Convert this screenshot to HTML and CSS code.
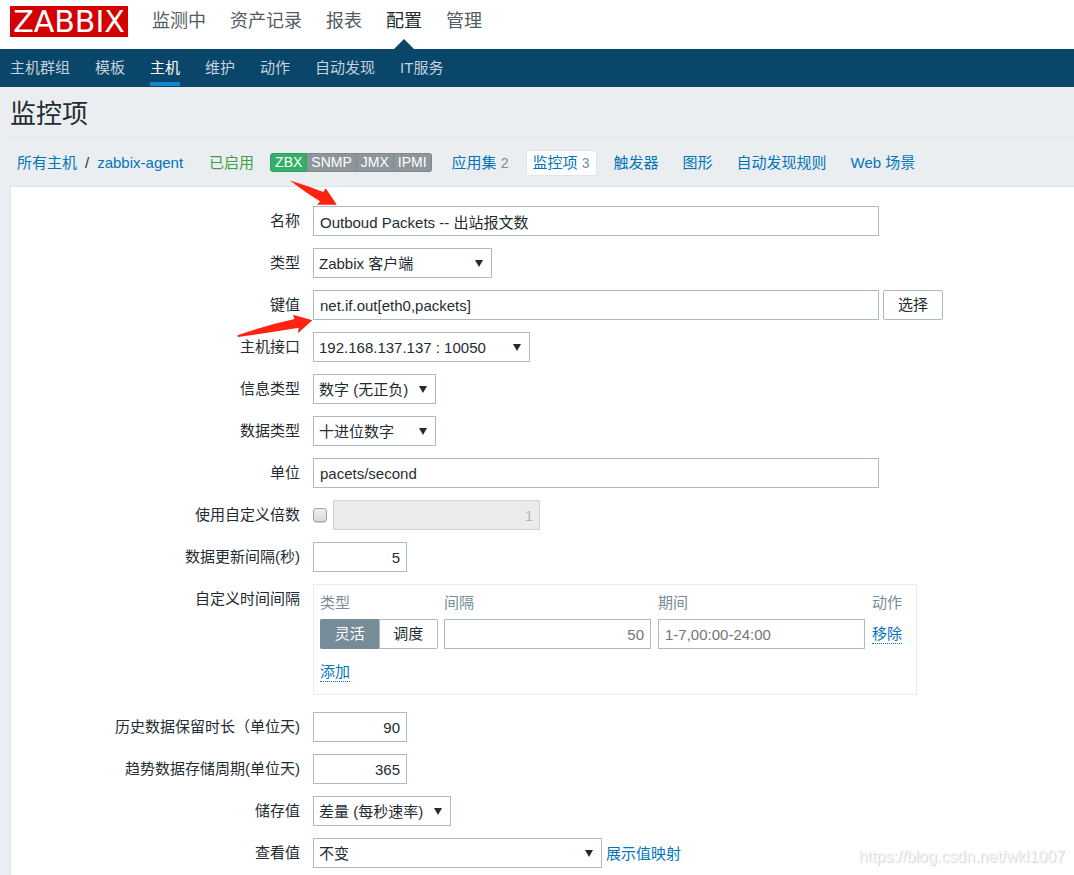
FILE: index.html
```html
<!DOCTYPE html>
<html lang="zh-CN">
<head>
<meta charset="utf-8">
<title>监控项</title>
<link rel="stylesheet" href="styles.css">
</head>
<body>
<header class="top">
  <a class="logo" href="#">ZABBIX</a>
  <nav class="top-nav">
    <a href="#">监测中</a>
    <a href="#">资产记录</a>
    <a href="#">报表</a>
    <a href="#" class="selected">配置</a>
    <a href="#">管理</a>
  </nav>
</header>
<nav class="sub-nav">
  <a href="#">主机群组</a>
  <a href="#">模板</a>
  <a href="#" class="selected">主机</a>
  <a href="#">维护</a>
  <a href="#">动作</a>
  <a href="#">自动发现</a>
  <a href="#">IT服务</a>
</nav>
<main class="page">
  <h1 class="title">监控项</h1>
  <div class="host-bar">
    <div class="crumbs"><a href="#">所有主机</a><span>/</span><a href="#">zabbix-agent</a></div>
    <span class="enabled">已启用</span>
    <div class="badges"><span class="badge on">ZBX</span><span class="badge">SNMP</span><span class="badge">JMX</span><span class="badge">IPMI</span></div>
    <nav class="tabs">
      <a href="#">应用集 <span class="count">2</span></a>
      <a href="#" class="selected">监控项 <span class="count">3</span></a>
      <a href="#">触发器</a>
      <a href="#">图形</a>
      <a href="#">自动发现规则</a>
      <a href="#">Web 场景</a>
    </nav>
  </div>
  <form class="panel">
    <div class="row">
      <label for="name">名称</label>
      <div class="field">
        <input class="text wide" id="name" type="text" value="Outboud Packets -- 出站报文数">
        <svg class="pointer pointer-name" width="48" height="26" viewBox="0 0 48 26" aria-hidden="true"><path d="M1 .6Q19 6 34.300 12L36.700 8.300 47.800 24.800H28.200L31 21.300Q17 13 1 .6Z"/></svg>
      </div>
    </div>
    <div class="row">
      <label for="type">类型</label>
      <div class="field"><span class="select w-type"><select id="type"><option>Zabbix 客户端</option></select></span></div>
    </div>
    <div class="row">
      <label for="key">键值</label>
      <div class="field">
        <input class="text wide" id="key" type="text" value="net.if.out[eth0,packets]">
        <button class="button" type="button">选择</button>
        <svg class="pointer pointer-key" width="76" height="24" viewBox="0 0 76 24" aria-hidden="true"><path d="M.5 21.300Q30 11 57.500 5L56 .7 75.300 6.300 61 19.300 61.700 13.700Q30 19 1 23Z"/></svg>
      </div>
    </div>
    <div class="row">
      <label for="iface">主机接口</label>
      <div class="field"><span class="select w-iface"><select id="iface"><option>192.168.137.137 : 10050</option></select></span></div>
    </div>
    <div class="row">
      <label for="info">信息类型</label>
      <div class="field"><span class="select w-data"><select id="info"><option>数字 (无正负)</option></select></span></div>
    </div>
    <div class="row">
      <label for="data">数据类型</label>
      <div class="field"><span class="select w-data"><select id="data"><option>十进位数字</option></select></span></div>
    </div>
    <div class="row">
      <label for="unit">单位</label>
      <div class="field"><input class="text wide" id="unit" type="text" value="pacets/second"></div>
    </div>
    <div class="row">
      <label for="multi">使用自定义倍数</label>
      <div class="field">
        <input class="check" id="multi" type="checkbox">
        <input class="text medium number" type="text" value="1" aria-label="倍数" disabled>
      </div>
    </div>
    <div class="row">
      <label for="delay">数据更新间隔(秒)</label>
      <div class="field"><input class="text small number" id="delay" type="text" value="5"></div>
    </div>
    <div class="row intervals-row">
      <span class="row-label">自定义时间间隔</span>
      <div class="intervals">
        <table>
          <thead><tr><th class="c-type">类型</th><th class="c-value">间隔</th><th class="c-value">期间</th><th>动作</th></tr></thead>
          <tbody>
            <tr>
              <td>
                <div class="toggle">
                  <input type="radio" name="mode" id="flex" checked><label for="flex">灵活</label>
                  <input type="radio" name="mode" id="sched"><label for="sched">调度</label>
                </div>
              </td>
              <td><input class="text medium number" type="text" placeholder="50" aria-label="间隔"></td>
              <td><input class="text medium" type="text" placeholder="1-7,00:00-24:00" aria-label="期间"></td>
              <td><a class="action" href="#">移除</a></td>
            </tr>
            <tr class="add-row"><td colspan="4"><a class="action" href="#">添加</a></td></tr>
          </tbody>
        </table>
      </div>
    </div>
    <div class="row">
      <label for="history">历史数据保留时长（单位天)</label>
      <div class="field"><input class="text small number" id="history" type="text" value="90"></div>
    </div>
    <div class="row">
      <label for="trends">趋势数据存储周期(单位天)</label>
      <div class="field"><input class="text small number" id="trends" type="text" value="365"></div>
    </div>
    <div class="row">
      <label for="store">储存值</label>
      <div class="field"><span class="select w-store"><select id="store"><option>差量 (每秒速率)</option></select></span></div>
    </div>
    <div class="row">
      <label for="show">查看值</label>
      <div class="field"><span class="select w-show"><select id="show"><option>不变</option></select></span><a class="map-link" href="#">展示值映射</a></div>
    </div>
  </form>
</main>
<div class="watermark">https://blog.csdn.net/wkl1007</div>
</body>
</html>
```

FILE: styles.css
```css
* { box-sizing: border-box; }

body {
  margin: 0;
  min-height: 100vh;
  display: flex;
  flex-direction: column;
  background: #ebeef0;
  color: #1f2c33;
  font: 15px/20px "Liberation Sans", "Noto Sans CJK SC", sans-serif;
}

a { color: #0275b8; text-decoration: none; }
input, select, button { font: inherit; color: inherit; margin: 0; }

.top {
  display: flex;
  align-items: flex-start;
  gap: 24px;
  height: 49px;
  padding: 6px 10px 0;
  background: #fff;
}
.logo {
  width: 118px;
  height: 31px;
  background: #d40000;
  color: #fff;
  font: 30px/32px "DejaVu Sans", sans-serif;
  text-align: center;
}
.top-nav { display: flex; gap: 24px; font-size: 18px; line-height: 30px; }
.top-nav a { position: relative; height: 43px; color: #4f5c64; }
.top-nav .selected { color: #1f2c33; }
.top-nav .selected::after {
  content: "";
  position: absolute;
  left: 50%;
  bottom: 0;
  margin-left: -10px;
  border: solid transparent;
  border-width: 0 10px 10px;
  border-bottom-color: #0a466a;
}

.sub-nav {
  display: flex;
  gap: 25px;
  height: 38px;
  padding: 0 10px 1px;
  background: #0a466a;
  line-height: 37px;
}
.sub-nav a { color: #c3d2dc; }
.sub-nav .selected { color: #fff; border-bottom: 4px solid #1385cd; }

.page { flex: 1; display: flex; flex-direction: column; padding-left: 10px; }
.title {
  margin: 0;
  padding: 11px 0 7px;
  border-bottom: 1px solid #dfe4e7;
  font-size: 26px;
  font-weight: 400;
  line-height: 32px;
}

.host-bar { display: flex; align-items: center; height: 48px; padding: 1px 0 0 7px; white-space: nowrap; }
.crumbs { display: flex; gap: 8px; margin-right: 26px; }
.enabled { margin-right: 16px; color: #429e47; }
.badges { display: flex; margin-right: 13px; font-size: 14px; line-height: 17px; }
.badge { padding: 0 4px; border: 1px solid #7f898f; border-left-width: 0; background: #8d969b; color: #fff; }
.badge.on { border-color: #2f9f5e; border-left-width: 1px; border-radius: 3px 0 0 3px; background: #34af67; }
.badge:last-child { border-radius: 0 3px 3px 0; }
.tabs { display: flex; gap: 10px; }
.tabs a { padding: 2px 6px; border: 1px solid transparent; border-radius: 3px; }
.tabs .selected { background: #fff; border-color: #dfe4e7; }
.count { color: #768d99; font-size: 14px; }

.panel {
  flex: 1;
  display: flex;
  flex-direction: column;
  gap: 12px;
  padding: 19px 0 7px;
  background: #fff;
  border: 1px solid #dfe4e7;
  border-width: 1px 0 0 1px;
}
.row { display: grid; grid-template-columns: 289px minmax(0, 1fr); column-gap: 13px; }
.row > label, .row-label { text-align: right; line-height: 29px; }
.field { position: relative; display: flex; align-items: center; gap: 4px; height: 30px; }

.text {
  height: 30px;
  padding: 0 6px;
  border: 1px solid #acbbc2;
  border-radius: 0;
  background: #fff;
}
.text:disabled { background: #ebebeb; border-color: #ced5d9; color: #acbbc2; }
.text::placeholder { color: #757575; opacity: 1; }
.wide { width: 566px; }
.medium { width: 207px; }
.small { width: 94px; }
.number { text-align: right; }

.button { width: 60px; height: 30px; padding: 0; border: 1px solid #acbbc2; border-radius: 2px; background: #fff; }
.map-link { padding-top: 2px; }

.select { position: relative; display: block; }
.select select {
  appearance: none;
  display: block;
  width: 100%;
  height: 30px;
  padding: 2px 20px 0 5px;
  border: 1px solid #acbbc2;
  border-radius: 0;
  background: #fff;
}
.select::after {
  content: "";
  position: absolute;
  right: 9px;
  top: 12px;
  border: solid transparent;
  border-width: 7px 4px 0;
  border-top-color: #1f2c33;
  pointer-events: none;
}
.w-type { width: 179px; }
.w-iface { width: 217px; }
.w-data { width: 123px; }
.w-store { width: 138px; }
.w-show { width: 289px; }

.check {
  appearance: none;
  width: 14px;
  height: 14px;
  margin-right: 2px;
  border: 1px solid #a3a3a3;
  border-radius: 3px;
  background: linear-gradient(#ededed, #dcdcdc);
  box-shadow: 0 1px 1px #d5d5d5;
}
.check:checked { background: #768d99; }

.pointer { position: absolute; fill: #ff2211; pointer-events: none; }
.pointer-name { left: -24px; top: -26px; }
.pointer-key { left: -76px; top: 24px; }

.intervals-row { margin-bottom: 5px; }
.intervals { width: 604px; padding: 0 6px; border: 1px solid #ebebeb; }
.intervals table { width: 100%; table-layout: fixed; border-collapse: collapse; }
.intervals th { height: 34px; padding: 2px 0 0; color: #768d99; font-weight: 400; text-align: left; }
.intervals td { height: 30px; padding: 0; }
.intervals .text { display: block; }
.c-type { width: 124px; }
.c-value { width: 214px; }
.intervals .add-row td { height: 45px; }
.action { padding-bottom: 1px; border-bottom: 1px dotted #0275b8; }

.toggle { position: relative; display: flex; width: 118px; }
.toggle input { position: absolute; opacity: 0; }
.toggle label { flex: 1; height: 30px; border: 1px solid #acbbc2; line-height: 28px; text-align: center; }
.toggle label:first-of-type { border-radius: 2px 0 0 2px; border-right: 0; }
.toggle label:last-of-type { border-radius: 0 2px 2px 0; }
.toggle input:checked + label { background: #768d99; border-color: #768d99; color: #fff; }

.watermark {
  position: fixed;
  right: 9px;
  bottom: 8px;
  color: #f4f4f4;
  font-size: 16px;
  text-shadow: 1px 1px 1px #d4d4d4;
  pointer-events: none;
}
```
